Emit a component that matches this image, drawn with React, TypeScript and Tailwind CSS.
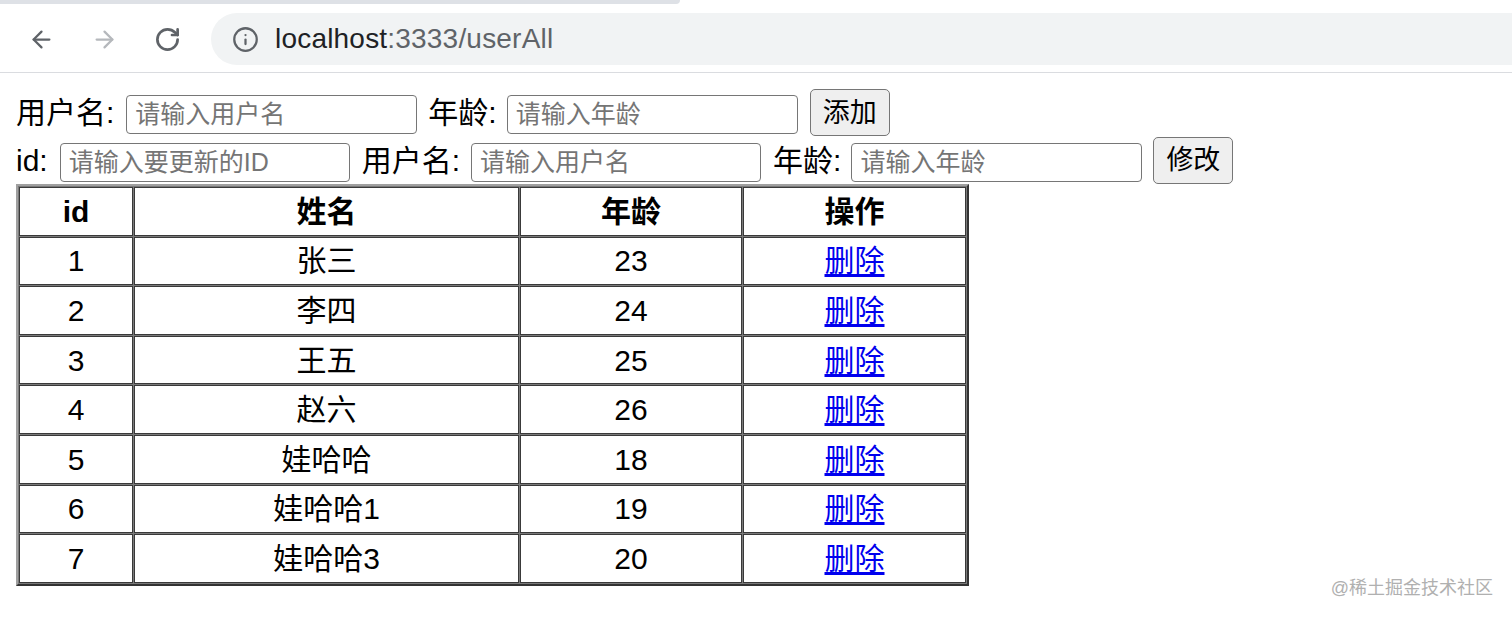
import { ArrowLeft, ArrowRight, RotateCw, Info } from "lucide-react";

const users = [
  { id: 1, name: "张三", age: 23 },
  { id: 2, name: "李四", age: 24 },
  { id: 3, name: "王五", age: 25 },
  { id: 4, name: "赵六", age: 26 },
  { id: 5, name: "娃哈哈", age: 18 },
  { id: 6, name: "娃哈哈1", age: 19 },
  { id: 7, name: "娃哈哈3", age: 20 },
];

const font = "font-['Liberation_Sans','Noto_Sans_CJK_SC',sans-serif]";

function Field({ placeholder, w = "w-[291px]" }: { placeholder: string; w?: string }) {
  return (
    <input
      placeholder={placeholder}
      className={`${w} h-[39px] border border-[#767676] rounded-[4px] px-[8px] text-[25px] text-black placeholder:text-[#757575] bg-white outline-none ${font}`}
    />
  );
}

function Button({ label }: { label: string }) {
  return (
    <button className="h-[47px] px-[12px] bg-[#efefef] border border-[#767676] rounded-[5px] text-[27px] text-black">
      {label}
    </button>
  );
}

export default function App() {
  return (
    <div className={`relative h-[620px] overflow-hidden bg-white ${font}`}>
      {/* Browser chrome */}
      <div className="h-[4px] bg-white">
        <div className="h-full w-[680px] bg-[#dee1e6] rounded-br-[4px]" />
      </div>
      <div className="h-[69px] flex items-center border-b border-[#dadce0]">
        <div className="flex items-center gap-[36px] pl-[28px] mt-[2px]">
          <ArrowLeft size={27} strokeWidth={2} className="text-[#5f6368]" />
          <ArrowRight size={27} strokeWidth={2} className="text-[#b5b8bc]" />
          <RotateCw size={27} strokeWidth={2.4} className="text-[#5f6368]" />
        </div>
        <div className="ml-[30px] flex-1 h-[52px] mt-[2px] bg-[#f1f3f4] rounded-l-full flex items-center pl-[21px]">
          <Info size={27} strokeWidth={2} className="text-[#5f6368]" />
          <span className="ml-[16px] text-[28px] tracking-[0.2px] text-[#202124]">
            localhost<span className="text-[#5f6368]">:3333/userAll</span>
          </span>
        </div>
      </div>

      {/* Page */}
      <div className="pl-[16px] pt-[16px] text-[30px] text-black">
        <div className="flex items-center h-[47px]">
          <span>用户名:</span>
          <span className="ml-[12px]"><Field placeholder="请输入用户名" /></span>
          <span className="ml-[11px]">年龄:</span>
          <span className="ml-[10px]"><Field placeholder="请输入年龄" /></span>
          <span className="ml-[12px]"><Button label="添加" /></span>
        </div>
        <div className="flex items-center h-[48px]">
          <span>id:</span>
          <span className="ml-[12px]"><Field placeholder="请输入要更新的ID" w="w-[290px]" /></span>
          <span className="ml-[12px]">用户名:</span>
          <span className="ml-[11px]"><Field placeholder="请输入用户名" w="w-[290px]" /></span>
          <span className="ml-[12px]">年龄:</span>
          <span className="ml-[10px]"><Field placeholder="请输入年龄" /></span>
          <span className="ml-[11px]"><Button label="修改" /></span>
        </div>

        <table className="table-fixed w-[953px] border-separate border-spacing-[1px] bg-[#7a7a7a] border-2 border-solid border-t-[#a0a0a0] border-l-[#a0a0a0] border-r-[#333] border-b-[#333]">
          <thead>
            <tr>
              <th className="w-[114px] h-[48.6px] bg-white border border-[#3a3a3a] font-bold">id</th>
              <th className="w-[385px] h-[48.6px] bg-white border border-[#3a3a3a] font-bold">姓名</th>
              <th className="w-[222px] h-[48.6px] bg-white border border-[#3a3a3a] font-bold">年龄</th>
              <th className="h-[48.6px] bg-white border border-[#3a3a3a] font-bold">操作</th>
            </tr>
          </thead>
          <tbody>
            {users.map((u) => (
              <tr key={u.id}>
                <td className="h-[48.6px] bg-white border border-[#3a3a3a] text-center">{u.id}</td>
                <td className="h-[48.6px] bg-white border border-[#3a3a3a] text-center">{u.name}</td>
                <td className="h-[48.6px] bg-white border border-[#3a3a3a] text-center">{u.age}</td>
                <td className="h-[48.6px] bg-white border border-[#3a3a3a] text-center">
                  <a href="#" className="text-[#0000ee] underline underline-offset-[3px]">删除</a>
                </td>
              </tr>
            ))}
          </tbody>
        </table>
      </div>

      <div className="absolute right-[19px] bottom-[18px] text-[18px] text-[#b0b0b0]">@稀土掘金技术社区</div>
    </div>
  );
}
